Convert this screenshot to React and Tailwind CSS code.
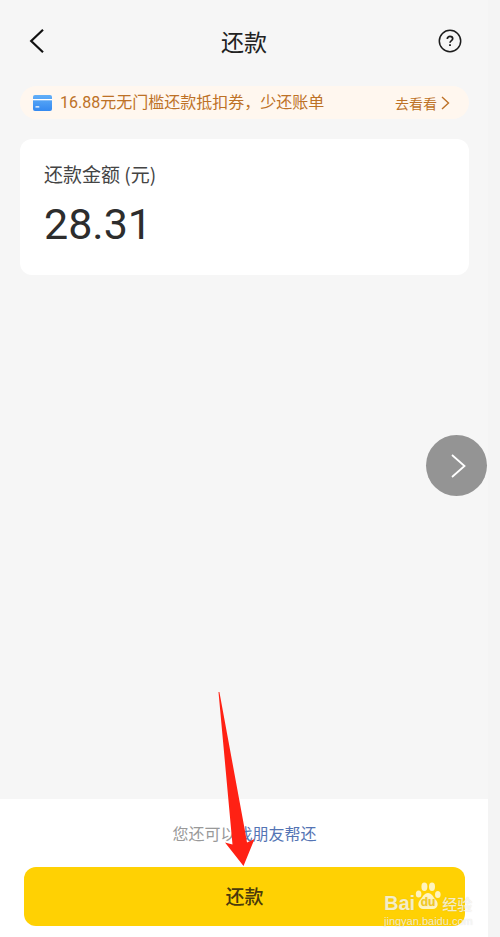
function CardIcon() {
  return (
    <svg viewBox="0 0 19 16" className="w-[19px] h-4 shrink-0" aria-hidden="true">
      <defs>
        <linearGradient id="card" x1="0" y1="0" x2="0" y2="1">
          <stop offset="0" stopColor="#62aff8" />
          <stop offset="1" stopColor="#3489f0" />
        </linearGradient>
      </defs>
      <rect width="19" height="16" rx="2" fill="url(#card)" />
      <rect y="4" width="19" height="1.3" fill="#fff" />
      <rect x="2.4" y="11.3" width="4" height="1.2" rx="0.5" fill="#fff" />
    </svg>
  );
}

function Header() {
  return (
    <header className="flex items-center justify-between h-[82px] px-[26px]">
      <button type="button" aria-label="返回">
        <svg viewBox="0 0 24 26" className="w-6 h-[26px]" fill="none" stroke="#111" strokeWidth="2.2">
          <path d="M17 1.8 5.2 13 17 24.2" />
        </svg>
      </button>
      <h1 className="text-[23px] leading-8 text-[#222]">还款</h1>
      <button type="button" aria-label="帮助">
        <svg viewBox="0 0 24 24" className="size-6" fill="none" stroke="#1c1c1c">
          <circle cx="12" cy="12" r="10.7" strokeWidth="1.5" />
          <path d="M9.3 9.9c0-1.5 1.2-2.5 2.7-2.5s2.7 1 2.7 2.4c0 1.8-2.7 1.9-2.7 4" strokeWidth="1.7" />
          <path d="M12 15.2v1.8" strokeWidth="1.8" />
        </svg>
      </button>
    </header>
  );
}

function CouponBanner() {
  return (
    <a href="#coupon" className="flex items-center h-[33px] mt-1 pl-[13px] pr-4 rounded-full bg-[#fff7ef] text-[#bd7126]">
      <CardIcon />
      <span className="ml-2 text-base leading-6 whitespace-nowrap font-['Roboto','Noto_Sans_CJK_SC',sans-serif]">
        16.88元无门槛还款抵扣券，少还账单
      </span>
      <span className="ml-auto flex items-center text-sm whitespace-nowrap">
        去看看
        <svg viewBox="0 0 16 16" className="size-4" fill="none" stroke="currentColor" strokeWidth="1.4">
          <path d="m5 2 6.5 6L5 14" />
        </svg>
      </span>
    </a>
  );
}

function AmountCard() {
  return (
    <section className="mt-5 h-[136px] px-6 pt-[21px] rounded-xl bg-white">
      <h2 className="text-[19px] leading-7 text-[#444]">还款金额 (元)</h2>
      <p className="mt-1 text-[43px] leading-[64px] text-[#2d2d2d] font-['Roboto',sans-serif]">28.31</p>
    </section>
  );
}

function Pointer() {
  return (
    <svg viewBox="0 0 40 176" className="absolute left-[216px] bottom-[70px] w-10 h-44 pointer-events-none" aria-hidden="true">
      <path d="M2.5 1 3.4 1 29 140 31 151.5l7.5-3.5L27.5 175 9 151.5l7.5 2z" fill="#ff2114" />
    </svg>
  );
}

function Watermark() {
  return (
    <div className="absolute right-3 bottom-[10px] w-[92px] text-white/75 pointer-events-none font-['Liberation_Sans','Noto_Sans_CJK_SC',sans-serif] [text-shadow:0_0_1px_rgba(120,120,120,0.3)]">
      <div className="flex items-baseline whitespace-nowrap">
        <span className="text-xl leading-5 font-bold">Bai</span>
        <svg viewBox="0 0 26 28" className="w-[26px] h-7" fill="currentColor">
          <ellipse cx="3.6" cy="12" rx="2.8" ry="3.6" />
          <ellipse cx="9.4" cy="4.8" rx="3" ry="4.2" />
          <ellipse cx="17" cy="4.8" rx="3" ry="4.2" />
          <ellipse cx="22.8" cy="12.5" rx="2.8" ry="3.6" />
          <path d="M13 11c4 0 5 4 7.5 6.5 4 4 2 9.5-2.5 9.5H8c-4.5 0-6.5-5.500-2.500-9.500C8 15 9 11 13 11z" />
          <text x="13" y="24" textAnchor="middle" fontSize="12" fontWeight="700" fill="#f5c91e">du</text>
        </svg>
        <span className="ml-px text-[15px] leading-5 font-medium">经验</span>
      </div>
      <p className="text-[11px] leading-3">jingyan.baidu.com</p>
    </div>
  );
}

export default function App() {
  return (
    <div className="min-h-screen pr-3 bg-[#f4f4f4] font-['Noto_Sans_CJK_SC',sans-serif]">
      <main className="relative flex flex-col min-h-screen bg-[#f6f6f6]">
        <Header />
        <div className="flex-1 pl-5 pr-[19px]">
          <CouponBanner />
          <AmountCard />
        </div>

        <button
          type="button"
          aria-label="下一张"
          className="absolute right-px top-[435px] size-[61px] rounded-full bg-[#949494] text-white flex items-center justify-center"
        >
          <svg viewBox="0 0 26 26" className="size-[26px]" fill="none" stroke="currentColor" strokeWidth="1.8">
            <path d="M8 2l12.5 11L8 24" />
          </svg>
        </button>

        <footer className="pl-6 pr-[23px] pt-5 pb-[11px] bg-white text-center">
          <p className="text-base leading-7 text-[#999]">
            您还可以<a href="#friend" className="text-[#5474b4]">找朋友帮还</a>
          </p>
          <button type="button" className="mt-5 w-full h-[59px] rounded-xl bg-[#ffd103] text-[19px] font-medium text-[#4a3a0c]">
            还款
          </button>
        </footer>

        <Pointer />
        <Watermark />
      </main>
    </div>
  );
}
